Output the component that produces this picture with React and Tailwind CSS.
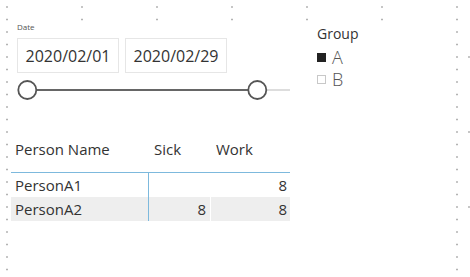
import React from 'react';

const dots = () => {
  const pts = [];
  for (let i = 0; i < 22; i++) {
    const y = 7 + i * 12.5;
    pts.push([7, y]);
    pts.push([457, y]);
  }
  [82, 157, 232, 307, 382].forEach((x) => {
    pts.push([x, 7]);
    pts.push([x, 19.5]);
  });
  [57, 132, 207].forEach((y) => pts.push([469, y]));
  return pts;
};

const rows = [
  { name: 'PersonA1', sick: '', work: '8', shaded: false },
  { name: 'PersonA2', sick: '8', work: '8', shaded: true },
];

const App = () => {
  return (
    <div
      className="relative w-[470px] h-[277px] bg-white overflow-hidden text-[#333]"
      style={{ fontFamily: '"Segoe UI", "Open Sans", "Noto Sans", sans-serif' }}
    >
      {/* canvas grid dots */}
      <svg className="absolute inset-0" width="470" height="277">
        {dots().map(([x, y], i) => (
          <rect key={i} x={x - 0.75} y={y - 0.75} width="1.5" height="1.5" fill="#9a9a9a" />
        ))}
      </svg>

      <div className="relative flex pt-[22px]">
        {/* Left: slicer + table */}
        <div className="ml-[11px] w-[279px] flex flex-col">
          <div className="pl-[6px] text-[8px] leading-[10px] text-[#555]">Date</div>
          <div className="flex gap-[6px] pl-[6px] mt-[6px]">
            {['2020/02/01', '2020/02/29'].map((d) => (
              <div
                key={d}
                className="w-[102px] h-[35px] border border-[#e6e6e6] flex items-center justify-center text-[16px] text-[#333]"
              >
                {d}
              </div>
            ))}
          </div>
          <svg width="279" height="22" className="mt-[6px]">
            <line x1="25" y1="11" x2="246" y2="11" stroke="#666" strokeWidth="2" />
            <line x1="256" y1="11" x2="279" y2="11" stroke="#ddd" strokeWidth="2" />
            <circle cx="16.3" cy="11" r="9" fill="#fff" stroke="#555" strokeWidth="1.8" />
            <circle cx="246.3" cy="11" r="9" fill="#fff" stroke="#555" strokeWidth="1.8" />
          </svg>

          {/* table */}
          <div className="mt-[36px] text-[15px]">
            <div className="grid grid-cols-[138px_62px_79px] h-[36px] items-start pt-[1px] border-b border-[#7db9dd]">
              <div className="pl-[4px]">Person Name</div>
              <div className="pl-[5px]">Sick</div>
              <div className="pl-[5px]">Work</div>
            </div>
            {rows.map((r) => (
              <div
                key={r.name}
                className={`grid grid-cols-[138px_62px_79px] h-[24px] items-center ${r.shaded ? 'bg-[#eeeeee]' : ''}`}
              >
                <div className="pl-[4px] h-full flex items-center border-r border-[#7db9dd]">{r.name}</div>
                <div className="pr-[4px] h-full flex items-center justify-end border-r border-white">{r.sick}</div>
                <div className="pr-[3px] h-full flex items-center justify-end">{r.work}</div>
              </div>
            ))}
          </div>
        </div>

        {/* Right: legend */}
        <div className="ml-[27px] mt-[3px] flex flex-col">
          <div className="text-[14px] leading-[18px] text-[#333]">Group</div>
          <div className="flex items-center gap-[6px] mt-[3px] h-[22px]">
            <span className="w-[9px] h-[9px] bg-[#222]" />
            <span className="text-[18px] font-light text-[#555]">A</span>
          </div>
          <div className="flex items-center gap-[6px] h-[22px]">
            <span className="w-[9px] h-[9px] border border-[#c8c8c8]" />
            <span className="text-[18px] font-light text-[#555]">B</span>
          </div>
        </div>
      </div>
    </div>
  );
};

export default App;
